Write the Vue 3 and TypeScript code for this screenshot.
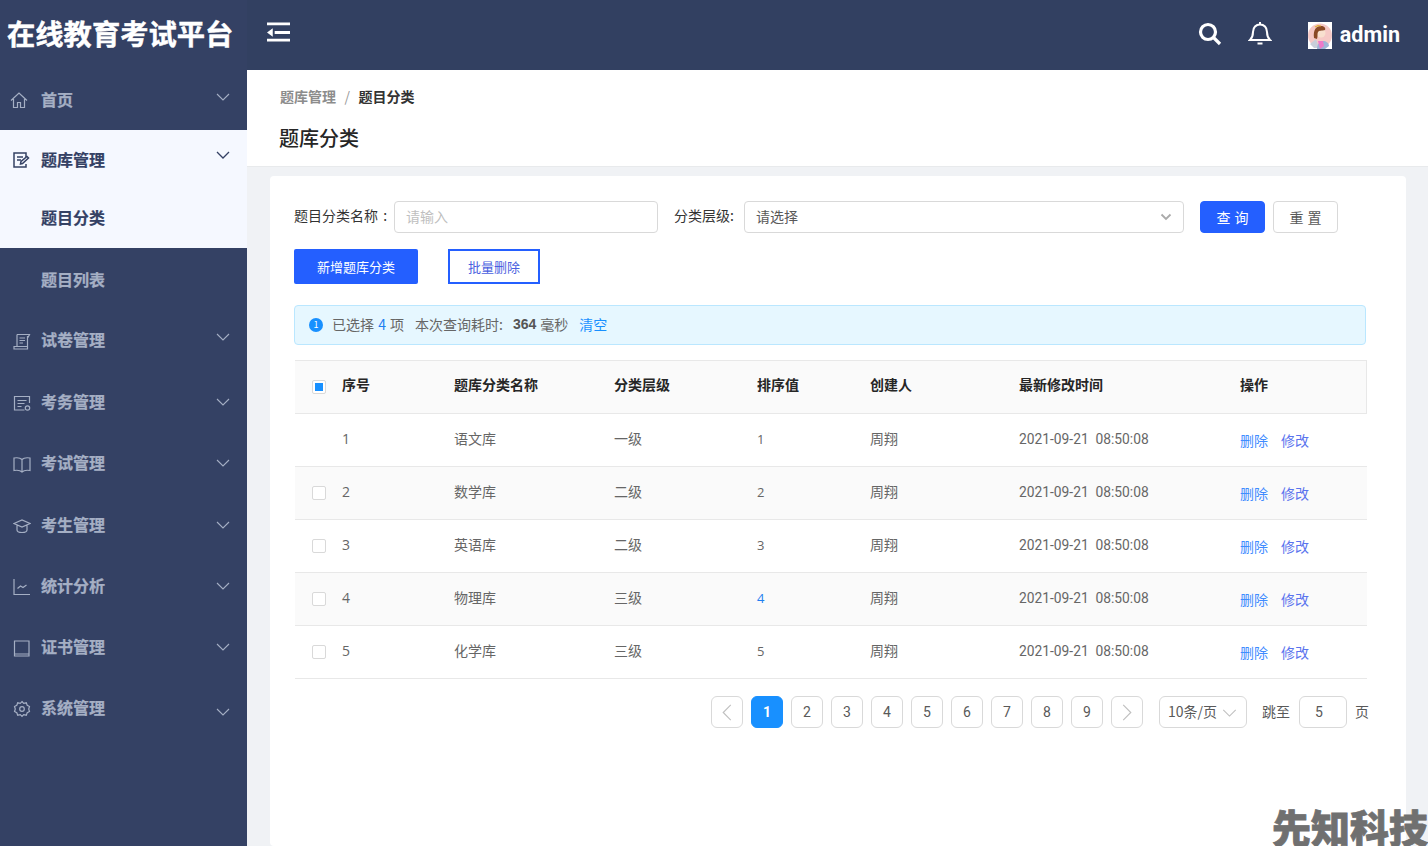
<script setup lang="ts">
interface MenuItem { label: string; icon: string; cls: string }
const lowerMenu: MenuItem[] = [
  { label: '试卷管理', icon: 'paper', cls: 'm1' },
  { label: '考务管理', icon: 'affair', cls: 'm2' },
  { label: '考试管理', icon: 'book', cls: 'm3' },
  { label: '考生管理', icon: 'cap', cls: 'm4' },
  { label: '统计分析', icon: 'chart', cls: 'm5' },
  { label: '证书管理', icon: 'cert', cls: 'm6' },
  { label: '系统管理', icon: 'gear', cls: 'm7' },
]
const rows = [
  { n: 1, name: '语文库', level: '一级', sort: 1, box: false },
  { n: 2, name: '数学库', level: '二级', sort: 2, box: true },
  { n: 3, name: '英语库', level: '二级', sort: 3, box: true },
  { n: 4, name: '物理库', level: '三级', sort: 4, box: true },
  { n: 5, name: '化学库', level: '三级', sort: 5, box: true },
]
const pages = [1, 2, 3, 4, 5, 6, 7, 8, 9]
</script>

<template>
  <div class="app">
    <aside class="side">
      <div class="logo">在线教育考试平台</div>
      <div class="mi home-row">
        <svg class="ic home-ic" viewBox="0 0 18 18"><path d="M1 9.500 9 2l8 7.500M3.500 8v8.500h4v-5h3v5h4V8" /></svg>
        <span>首页</span>
        <svg class="chev" viewBox="0 0 14 8"><path d="M1 1l6 6 6-6" /></svg>
      </div>
      <div class="open">
        <div class="open-head">
          <svg class="ic dark" viewBox="0 0 18 18"><path d="M14 6V2H2v14h12v-3M5 6h6M5 9h4" /><path d="M8.500 13l.5-2.500 6-5 1.500 1.500-6 5.500z" /></svg>
          <span>题库管理</span>
          <svg class="chev dark" viewBox="0 0 14 8"><path d="M1 1l6 6 6-6" /></svg>
        </div>
        <div class="open-sub">题目分类</div>
      </div>
      <div class="sub-dark">题目列表</div>
      <div v-for="m in lowerMenu" :key="m.label" class="mi" :class="m.cls">
        <svg class="ic" viewBox="0 0 18 18">
          <template v-if="m.icon === 'paper'"><path d="M4 1.500h12.500l-1.500 3M4 1.500v12M14.500 3v10.500M1 16h13.500v-2.500H1zM6.500 5h5.500M6.500 7.500h5.500M6.500 10h3.500" /></template>
          <template v-else-if="m.icon === 'affair'"><path d="M16.500 9V2.500h-15v13.500h10M4.500 6.500h9M4.500 9.500h7M4.500 12.500h4" /><circle cx="14.500" cy="14" r="2.200" /></template>
          <template v-else-if="m.icon === 'book'"><path d="M9 4.500C7 2.500 4 2.500 1 3v12.500c3-.5 6-.5 8 1.500 2-2 5-2 8-1.500V3c-3-.5-6-.5-8 1.500zM9 4.500V17" /></template>
          <template v-else-if="m.icon === 'cap'"><path d="M1 6.500 9 3l8 3.500L9 10zM4 8.500V13c0 1.500 2.500 2.500 5 2.500s5-1 5-2.500V8.500" /></template>
          <template v-else-if="m.icon === 'chart'"><path d="M1 1v15.500h16M4.500 10.500l3-2.500 2.500 1.500 3.500-2.500" /></template>
          <template v-else-if="m.icon === 'cert'"><path d="M16 2H1.500v13H16zM16 2v15H1.500v-2" /></template>
          <template v-else><path d="M9 1.500l1.700 1.800 2.600-.5.900 2.500 2.300 1.200-.8 2.500.8 2.500-2.300 1.200-.9 2.500-2.600-.5L9 16.500 7.300 14.700l-2.600.5-.9-2.500-2.300-1.200.8-2.500-.8-2.500 2.300-1.200.9-2.500 2.600.5z" /><circle cx="9" cy="9" r="2.300" /></template>
        </svg>
        <span>{{ m.label }}</span>
        <svg class="chev" viewBox="0 0 14 8"><path d="M1 1l6 6 6-6" /></svg>
      </div>
    </aside>

    <div class="right">
      <header class="top">
        <svg class="fold" viewBox="0 0 24 20"><path d="M0 0h24v3H0zM8 9h16v3H8zM6 6v9L0 10.500zM0 17h24v3H0z" /></svg>
        <div class="top-r">
          <svg class="t-ic search" viewBox="0 0 24 24"><circle cx="10" cy="10" r="7.500" /><path d="M15.500 15.500 22 22" /></svg>
          <svg class="t-ic bell" viewBox="0 0 24 24"><path d="M2 19h20c-2-2-3-3.500-3-8 0-4.500-3-7.500-7-7.500S5 6.500 5 11c0 4.500-1 6-3 8zM12 1v2.500M9.500 22.500h5" /></svg>
          <svg class="avatar" viewBox="0 0 24 27" preserveAspectRatio="none">
            <rect width="24" height="27" fill="#fff" />
            <circle cx="12" cy="13.500" r="12" fill="#f6c9c6" />
            <path d="M2 22l6-5 3 9H6z" fill="#c9ced9" />
            <path d="M9 27c0-5 3-8 6-8s6 2 6 5l-4 3z" fill="#9fb4d6" />
            <path d="M10 19h5l1 5-4 3z" fill="#ee79c9" />
            <circle cx="13" cy="11" r="4.500" fill="#f8e0cf" />
            <path d="M6 16C5 8 8 4 13 4c3 0 5 2 4 4-3 1-6 0-7 2-1 2 0 4-1 7z" fill="#8a4a26" />
            <path d="M7 5l3-1.500 3 .5" fill="none" stroke="#e0b030" stroke-width="1.200" />
          </svg>
          <span class="admin">admin</span>
        </div>
      </header>

      <section class="crumbs">
        <div class="bc"><span class="bc-a">题库管理</span><span class="bc-s">/</span><span class="bc-b">题目分类</span></div>
        <h1>题库分类</h1>
      </section>

      <main class="body">
        <div class="card">
          <div class="filter">
            <label class="l1">题目分类名称 :</label>
            <div class="inp i1">请输入</div>
            <label class="l2">分类层级:</label>
            <div class="inp i2"><span>请选择</span>
              <svg class="sel-chev" viewBox="0 0 12 8"><path d="M1.500 1.500 6 6l4.500-4.500" /></svg>
            </div>
            <button class="btn pri">查 询</button>
            <button class="btn def">重 置</button>
          </div>
          <div class="acts">
            <button class="add">新增题库分类</button>
            <button class="del">批量删除</button>
          </div>
          <div class="alert">
            <span class="dot">1</span>
            <span class="a-t">已选择 <b class="blue">4</b> 项</span>
            <span class="a-t a2">本次查询耗时:</span>
            <strong>364</strong>
            <span class="a-t a3">毫秒</span>
            <a class="clear">清空</a>
          </div>
          <div class="table">
            <div class="tr th">
              <div class="cb-cell"><span class="cb on"><i /></span></div>
              <div>序号</div><div>题库分类名称</div><div>分类层级</div><div>排序值</div><div>创建人</div><div>最新修改时间</div><div>操作</div>
            </div>
            <div v-for="r in rows" :key="r.n" class="tr td" :class="{ alt: r.n % 2 === 0 }">
              <div class="cb-cell"><span v-if="r.box" class="cb" /></div>
              <div class="num">{{ r.n }}</div>
              <div>{{ r.name }}</div>
              <div>{{ r.level }}</div>
              <div class="sort" :class="{ blue: r.n === 4 }">{{ r.sort }}</div>
              <div>周翔</div>
              <div class="time">2021-09-21&nbsp;&nbsp;08:50:08</div>
              <div class="ops"><a>删除</a><a>修改</a></div>
            </div>
          </div>
          <div class="pager">
            <span class="pg"><svg viewBox="0 0 10 18"><path d="M9 1 1 9l8 8" /></svg></span>
            <span v-for="p in pages" :key="p" class="pg" :class="{ cur: p === 1 }">{{ p }}</span>
            <span class="pg"><svg viewBox="0 0 10 18"><path d="M1 1l8 8-8 8" /></svg></span>
            <span class="size">10条/页<svg viewBox="0 0 16 9"><path d="M1 1l7 7 7-7" /></svg></span>
            <span class="jump">跳至</span>
            <span class="jump-i">5</span>
            <span class="ye">页</span>
          </div>
        </div>
      </main>
    </div>
    <div class="mark">先知科技</div>
  </div>
</template>

<style>
html, body { margin: 0; height: 100%; overflow: hidden; }
</style>

<style scoped>
.app { position: relative; display: flex; width: 1428px; height: 846px; overflow: hidden; font-family: "Noto Sans CJK SC", "Noto Sans", sans-serif; background: #f0f2f5; }
.side { width: 247px; flex: none; background: #344164; color: #a5afc4; font-size: 16px; font-weight: 700; -webkit-text-stroke: .25px currentColor; }
.logo { height: 70px; line-height: 65px; padding-left: 7px; color: #fff; font-size: 28.300px; font-weight: 700; white-space: nowrap; -webkit-text-stroke: .4px #fff; }
.mi { position: relative; display: flex; align-items: center; height: 61.3px; box-sizing: border-box; padding: 0 0 2px 41px; }
.home-row { height: 60px; }
.ic { position: absolute; left: 13px; top: 50%; width: 18px; height: 18px; margin-top: -8px; fill: none; stroke: #a5afc4; stroke-width: 1.200; }
.home-ic { left: 10px; margin-top: -9px; }
.ic.dark { stroke: #344164; left: 12px; stroke-width: 1.500; margin-top: -9px; }
.chev { position: absolute; left: 216px; top: 50%; width: 14px; height: 8px; margin-top: -4px; fill: none; stroke: #a5afc4; stroke-width: 1.100; }
.home-row .chev { margin-top: -7px; }
.m1 { padding-bottom: 3px; }
.m1 .chev { margin-top: -7.500px; }
.m7 .chev { margin-top: 0; }
.chev.dark { stroke: #344164; stroke-width: 1.300; margin-top: -9px; }
.open { height: 118px; background: #f5f8ff; color: #344164; -webkit-text-stroke: .2px #344164; }
.open-head { position: relative; display: flex; align-items: center; height: 59px; box-sizing: border-box; padding: 0 0 2px 41px; }
.open-sub { height: 59px; line-height: 57px; padding-left: 41px; }
.sub-dark { height: 62px; line-height: 62px; padding-left: 41px; }
.right { flex: 1; display: flex; flex-direction: column; min-width: 0; }
.top { height: 70px; flex: none; background: #324061; display: flex; align-items: center; justify-content: space-between; padding-left: 20px; }
.fold { width: 23px; height: 20px; margin-top: -6px; fill: #fff; }
.top-r { display: flex; align-items: center; margin-top: -2px; }
.t-ic { fill: none; stroke: #fff; }
.search { width: 24px; height: 24px; stroke-width: 3.200; }
.bell { width: 24px; height: 24px; margin-left: 26px; stroke-width: 2; margin-top: -2px; }
.avatar { width: 24px; height: 27px; margin-left: 36px; margin-top: 3px; }
.admin { margin: 0 28px 0 8px; color: #fff; font: 700 21.600px Roboto, sans-serif; }
.crumbs { height: 97px; flex: none; box-sizing: border-box; background: #fff; border-bottom: 1px solid #e8eaec; padding: 16px 32px 0; }
.bc { font-size: 14px; line-height: 21px; padding-left: 1px; }
.bc-a { color: #8c8c8c; font-weight: 700; }
.bc-s { color: #999; margin: 0 8.500px; font-weight: 400; }
.bc-b { color: #333; font-weight: 700; }
h1 { margin: 17px 0 0; font-size: 20px; line-height: 28px; font-weight: 500; color: #262626; }
.body { flex: 1; padding: 9px 22px 0 23px; min-height: 0; }
.card { height: 100%; box-sizing: border-box; background: #fff; border-radius: 4px; padding: 25px 40px 0 24px; color: #666; font-size: 14px; }
.filter { display: flex; align-items: center; height: 32px; }
.l1, .l2 { color: #333; font-size: 14px; white-space: nowrap; padding-bottom: 5px; }
.l1 { width: 100px; word-spacing: 2px; }
.l2 { margin-left: 16px; width: 70px; }
.inp { box-sizing: border-box; height: 32px; border: 1px solid #d9d9d9; border-radius: 4px; padding: 0 11px; line-height: 28px; font-size: 14px; }
.i1 { width: 264px; color: #bfbfbf; }
.i2 { position: relative; width: 440px; color: #595959; }
.sel-chev { position: absolute; right: 11px; top: 11px; width: 12px; height: 8px; fill: none; stroke: #aaa; stroke-width: 1.800; }
.btn { box-sizing: border-box; width: 65px; height: 32px; border-radius: 4px; font: 14px "Noto Sans CJK SC", sans-serif; padding: 0; word-spacing: 1px; }
.pri { margin-left: 16px; background: #245fff; border: 1px solid #245fff; color: #fff; }
.def { margin-left: 8px; background: #fff; border: 1px solid #d9d9d9; color: #595959; }
.acts { display: flex; margin-top: 16px; height: 35px; }
.add, .del { font: 13px "Noto Sans CJK SC", sans-serif; padding: 0; }
.add { width: 124px; background: #245fff; border: 0; border-radius: 2px; color: #fff; }
.del { width: 92px; margin-left: 30px; background: #fff; border: 2px solid #245fff; color: #4a5fe0; }
.alert { display: flex; align-items: center; box-sizing: border-box; height: 40px; margin-top: 21px; background: #e6f7ff; border: 1px solid #bae7ff; border-radius: 4px; padding: 0 0 2px 14px; font-size: 14px; color: #666; }
.a-t { word-spacing: 1px; }
.dot { width: 14px; height: 14px; border-radius: 50%; background: #1890ff; color: #fff; font-size: 9px; line-height: 14px; text-align: center; margin: 2px 9px 0 0; }
.blue { color: #1f7ff0; font-weight: 400; }
.a2 { margin-left: 11px; }
strong { margin-left: 10px; color: #555; font: 700 14px "Liberation Sans", sans-serif; }
.a3 { margin-left: 4px; }
.clear { margin-left: 11px; color: #1890ff; }
.table { margin-top: 15px; width: 1072px; margin-left: 1px; }
.tr { display: grid; grid-template-columns: 47px 112px 160px 143px 113px 149px 221px 127px; align-items: center; box-sizing: border-box; border-bottom: 1px solid #e8e8e8; height: 53px; font-size: 14px; color: #666; }
.th { height: 54px; background: #fafafa; color: #262626; font-weight: 700; border-top: 1px solid #e8e8e8; border-right: 1px solid #e8e8e8; }
.th > div { margin-top: -6px; }
.th > .cb-cell { margin-top: 0; }
.td.alt { background: #fafafa; }
.td > div { margin-top: -5px; }
.td > .cb-cell { margin-top: 0; }
.td > .ops { margin-top: -1px; }
.td > .num, .td > .sort, .td > .time { margin-top: -3px; }
.cb-cell { display: flex; padding-left: 17px; }
.cb { display: flex; align-items: center; justify-content: center; box-sizing: border-box; width: 14px; height: 14px; border: 1px solid #d9d9d9; border-radius: 2px; background: #fff; }
.cb i { width: 8px; height: 8px; background: #1890ff; }
.num { font: 14px "Open Sans", sans-serif; }
.sort { font: 13px "Open Sans", sans-serif; }
.time { font: 13.800px Roboto, sans-serif; white-space: nowrap; }
.ops { display: flex; gap: 13px; color: #3f8cff; }
.ops a:last-child { color: #5a74ee; }
.pager { display: flex; align-items: center; height: 32px; margin-top: 17px; margin-left: 417px; width: 680px; font: 14px Roboto, sans-serif; color: #595959; white-space: nowrap; }
.pager > span { flex: none; }
.pg { box-sizing: border-box; display: flex; align-items: center; justify-content: center; width: 32px; height: 32px; margin-right: 8px; border: 1px solid #d9d9d9; border-radius: 6px; background: #fff; }
.pg svg { width: 10px; height: 17px; fill: none; stroke: #bfbfbf; stroke-width: 1.200; }
.cur { background: #1890ff; border-color: #1890ff; color: #fff; font-weight: 700; }
.size { position: relative; box-sizing: border-box; width: 88px; height: 32px; line-height: 28px; margin-left: 8px; padding-left: 8px; border: 1px solid #d9d9d9; border-radius: 6px; font-family: "Noto Sans CJK SC", sans-serif; }
.size svg { position: absolute; right: 9px; top: 12px; width: 15px; height: 8px; fill: none; stroke: #bfbfbf; stroke-width: 1.200; }
.jump { margin-left: 15px; width: 37px; padding-bottom: 2px; font-family: "Noto Sans CJK SC", sans-serif; }
.jump-i { box-sizing: border-box; width: 48px; height: 32px; line-height: 30px; border: 1px solid #d9d9d9; border-radius: 6px; padding-left: 15px; }
.ye { margin-left: 8px; padding-bottom: 2px; font-family: "Noto Sans CJK SC", sans-serif; }
.mark { position: absolute; right: 0; bottom: 0; color: #707070; font-size: 39px; font-weight: 900; line-height: 39px; white-space: nowrap; -webkit-text-stroke: .8px #707070; }
</style>
